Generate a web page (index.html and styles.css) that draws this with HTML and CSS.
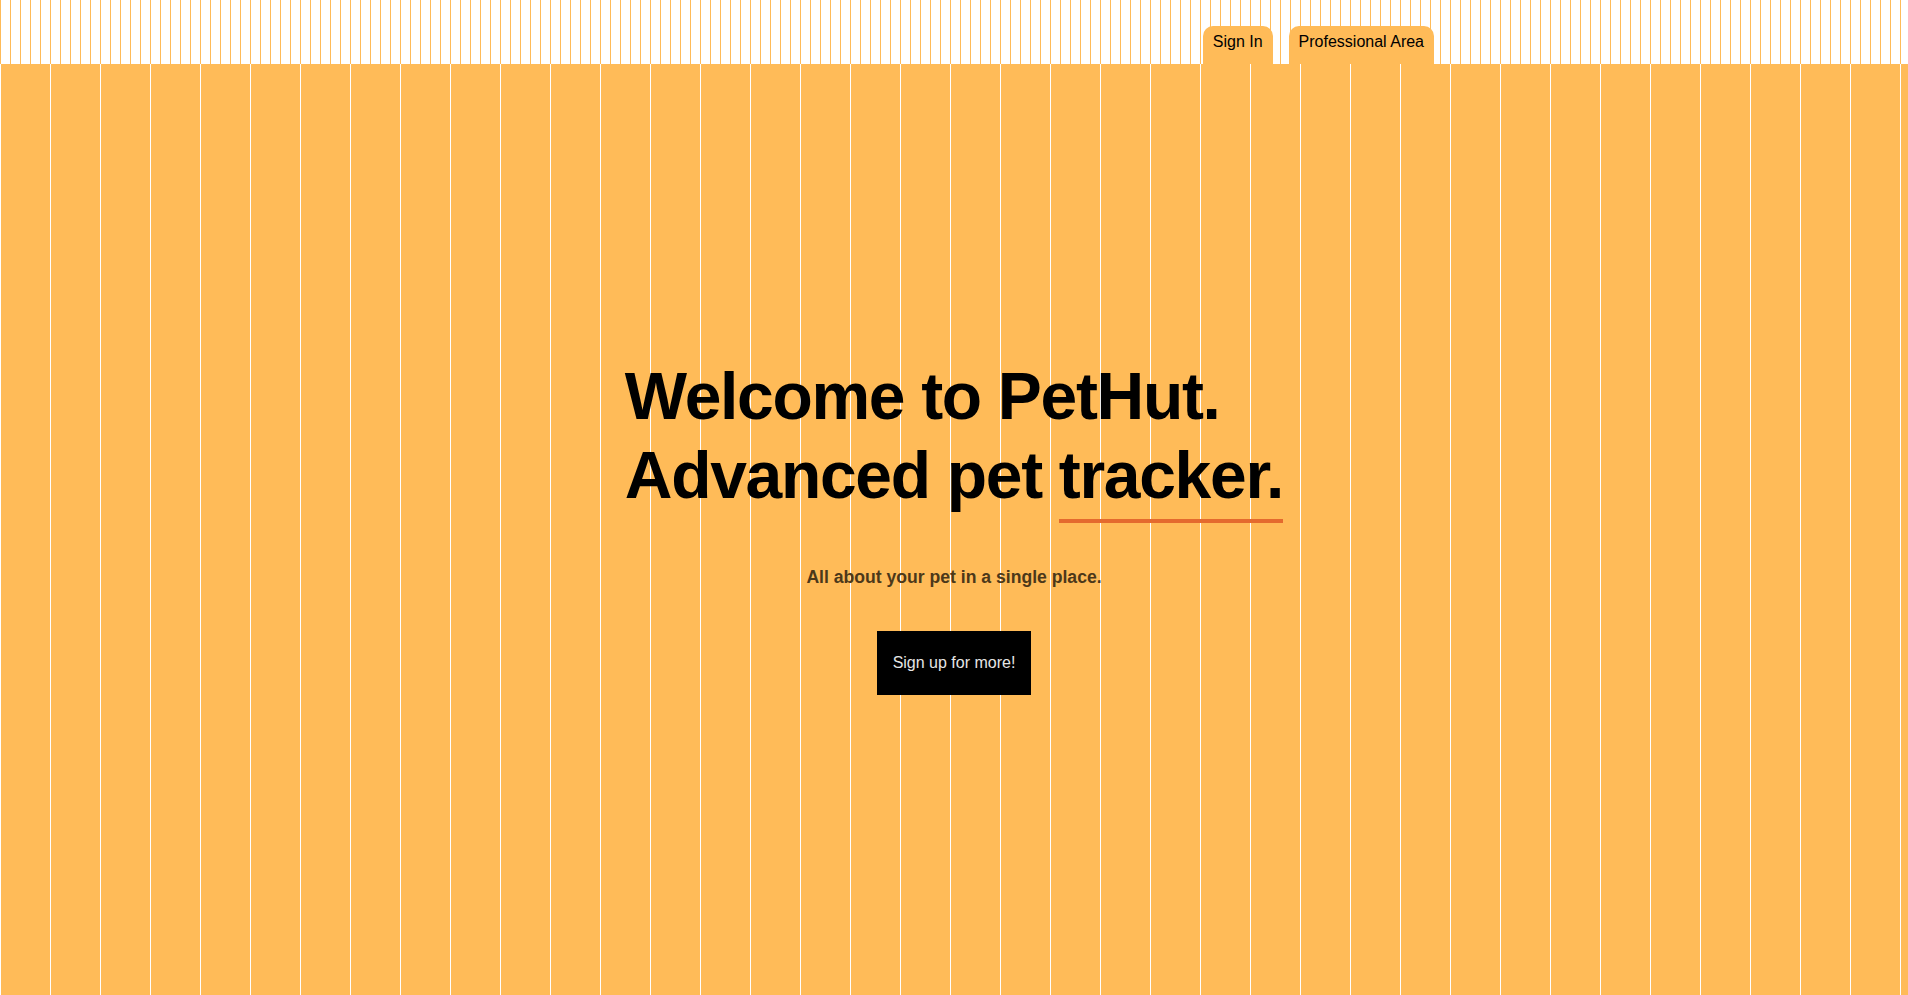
FILE: index.html
```html
<!DOCTYPE html>
<html lang="en">
<head>
<meta charset="utf-8">
<title>PetHut</title>
<link rel="stylesheet" href="styles.css">
</head>
<body>
<header class="topbar">
  <nav class="nav">
    <a class="tab" href="#">Sign In</a>
    <a class="tab" href="#">Professional Area</a>
  </nav>
</header>
<main class="hero">
  <h1 class="title">Welcome to PetHut.<br>Advanced pet <span class="mark">tracker.</span></h1>
  <p class="subtitle">All about your pet in a single place.</p>
  <a class="cta" href="#">Sign up for more!</a>
</main>
</body>
</html>
```

FILE: styles.css
```css
* { box-sizing: border-box; }

html, body {
  margin: 0;
  padding: 0;
  height: 100%;
}

body {
  font-family: "Liberation Sans", Arial, Helvetica, sans-serif;
  color: #000;
  display: flex;
  flex-direction: column;
  background: repeating-linear-gradient(90deg, #ffffff 0 1px, #ffbb58 1px 50px);
}

.topbar {
  height: 64px;
  flex: none;
  background: repeating-linear-gradient(90deg, #ffbb58 0 1px, #ffffff 1px 10px);
}

.nav {
  max-width: 960px;
  height: 100%;
  margin: 0 auto;
  display: flex;
  justify-content: flex-end;
  align-items: flex-end;
  gap: 16px;
}

.tab {
  display: block;
  height: 38px;
  padding: 7px 10px 0;
  background: #ffbb58;
  border-radius: 10px 10px 0 0;
  color: #000;
  text-decoration: none;
  font-size: 16px;
  line-height: 18px;
}

.hero {
  flex: 1;
  display: flex;
  flex-direction: column;
  align-items: center;
  justify-content: center;
  padding-bottom: 7px;
}

.title {
  margin: 0 0 44px;
  font-size: 66px;
  line-height: 1.2;
  font-weight: 700;
  letter-spacing: -0.02em;
  text-align: left;
  width: fit-content;
}

.mark {
  display: inline-block;
  padding-bottom: 3px;
  border-bottom: 4px solid #e46a2e;
}

.subtitle {
  margin: 0 0 44px;
  font-size: 17.6px;
  font-weight: 700;
  line-height: 1.15;
  color: #4c381a;
}

.cta {
  display: block;
  background: #000;
  color: #e6e6e6;
  text-decoration: none;
  font-size: 16px;
  line-height: 18px;
  padding: 23px 16px;
}
```
